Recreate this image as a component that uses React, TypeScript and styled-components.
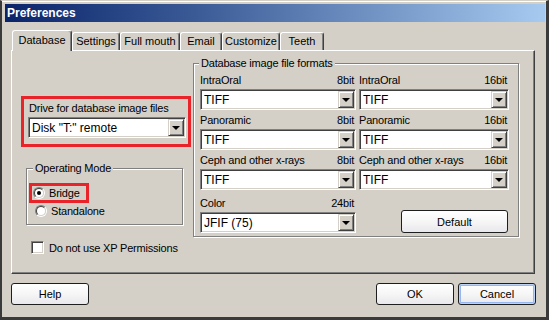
import React from "react";
import styled, { createGlobalStyle, css } from "styled-components";

const FACE = "#d4d0c8";
const RED = "#e8232a";

const Global = createGlobalStyle`
  html, body { margin: 0; padding: 0; background: ${FACE}; }
  body { font-family: "Liberation Sans", Arial, sans-serif; font-size: 11px; letter-spacing: -0.2px; color: #000; }
  * { box-sizing: border-box; }
`;

const Window = styled.div`
  width: 549px;
  height: 320px;
  background: ${FACE};
  border-left: 2px solid #3a3a3a;
  border-right: 3px solid #3a3a3a;
  border-bottom: 3px solid #3a3a3a;
  border-top: 1px solid ${FACE};
  box-shadow: inset 0 1px 0 #fff;
  padding: 3px 1px 0 3px;
  display: flex;
  flex-direction: column;
`;

const TitleBar = styled.div`
  height: 18px;
  background: linear-gradient(to right, #0a246a, #3a5a96 35%, #a6caf0);
  color: #fff;
  font-weight: bold;
  font-size: 12px;
  letter-spacing: 0;
  display: flex;
  align-items: center;
  padding-left: 2px;
`;

const TabStrip = styled.div`
  margin-top: 8px;
  height: 20px;
  padding-left: 7px;
  display: flex;
  align-items: flex-end;
  position: relative;
  z-index: 1;
`;

const Tab = styled.div<{ $w: number; $active?: boolean }>`
  width: ${(p) => p.$w}px;
  height: 18px;
  background: ${FACE};
  border-top: 1px solid #fff;
  border-left: 1px solid #fff;
  border-right: 1px solid #404040;
  border-radius: 3px 3px 0 0;
  box-shadow: inset -1px 0 0 #808080;
  display: flex;
  align-items: center;
  justify-content: center;
  padding-bottom: 1px;
  font-size: 11px;
  letter-spacing: 0;
  white-space: nowrap;
  ${(p) =>
    p.$active &&
    css`
      height: 21px;
      margin-bottom: -1px;
      padding-bottom: 3px;
    `}
`;

const Panel = styled.div`
  margin-left: 6px;
  width: 524px;
  height: 224px;
  border-top: 1px solid #fff;
  border-left: 1px solid #fff;
  border-right: 1px solid #404040;
  border-bottom: 1px solid #404040;
  box-shadow: inset -1px -1px 0 #808080;
  display: flex;
  align-items: flex-start;
  padding-left: 9px;
`;

const LeftCol = styled.div`
  margin-top: 45px;
  width: 170px;
  flex: none;
  display: flex;
  flex-direction: column;
  align-items: flex-start;
`;

const Highlight = styled.div`
  border: 3px solid ${RED};
`;

const DriveBox = styled(Highlight)`
  width: 170px;
  padding: 0 2px 6px 4px;
  display: flex;
  flex-direction: column;
`;

const FieldLabel = styled.div`
  height: 18px;
  display: flex;
  align-items: center;
  justify-content: space-between;
  padding-left: 1px;
  padding-right: 2px;
  white-space: nowrap;
`;

const GroupBox = styled.div`
  position: relative;
  border: 1px solid #808080;
  box-shadow: inset 1px 1px 0 #fff, 1px 1px 0 #fff;
`;

const Legend = styled.span<{ $left: number }>`
  position: absolute;
  top: -7px;
  left: ${(p) => p.$left}px;
  background: ${FACE};
  padding: 0 2px;
  line-height: 13px;
  white-space: nowrap;
`;

const ModeGroup = styled(GroupBox)`
  margin-top: 21px;
  margin-left: 5px;
  width: 157px;
  padding: 14px 0 5px 2px;
  display: flex;
  flex-direction: column;
`;

const RadioRow = styled.div`
  display: flex;
  align-items: center;
  gap: 4px;
  height: 16px;
  padding-left: 6px;
`;

const BridgeRow = styled(Highlight)`
  width: 60px;
  height: 20px;
  display: flex;
  align-items: center;
  gap: 4px;
  padding-left: 1px;
`;

const RadioOuter = styled.span`
  width: 12px;
  height: 12px;
  border-radius: 50%;
  border: 1px solid;
  border-color: #808080 #fff #fff #808080;
  display: inline-flex;
`;

const RadioInner = styled.span`
  flex: 1;
  border-radius: 50%;
  border: 1px solid;
  border-color: #404040 ${FACE} ${FACE} #404040;
  background: #fff;
  display: flex;
  align-items: center;
  justify-content: center;
`;

const Dot = styled.span`
  width: 4px;
  height: 4px;
  border-radius: 50%;
  background: #000;
`;

const Radio = ({ checked }: { checked?: boolean }) => (
  <RadioOuter>
    <RadioInner>{checked && <Dot />}</RadioInner>
  </RadioOuter>
);

const CheckRow = styled.div`
  margin-top: 16px;
  margin-left: 10px;
  display: flex;
  align-items: center;
  gap: 5px;
  height: 13px;
  white-space: nowrap;
`;

const CheckBox = styled.span`
  width: 13px;
  height: 13px;
  background: #fff;
  border: 1px solid;
  border-color: #808080 #fff #fff #808080;
  box-shadow: inset 1px 1px 0 #404040, inset -1px -1px 0 ${FACE};
`;

const FormatGroup = styled(GroupBox)`
  margin-top: 12px;
  margin-left: 2px;
  width: 326px;
  flex: none;
  padding: 7px 9px 3px 6px;
  display: grid;
  grid-template-columns: 156px 150px;
  column-gap: 3px;
  row-gap: 1px;
`;

const Field = styled.div<{ $extra?: number }>`
  display: flex;
  flex-direction: column;
  margin-top: ${(p) => p.$extra || 0}px;
`;

const FormatLabel = styled(FieldLabel)`
  padding-left: 0;
`;

const ButtonCell = styled.div`
  display: flex;
  justify-content: flex-end;
  align-items: flex-end;
  padding-right: 1px;
  margin-top: 3px;
`;

const ComboBox = styled.div<{ $h?: number }>`
  height: ${(p) => p.$h || 21}px;
  background: #fff;
  border: 1px solid;
  border-color: #808080 #fff #fff #808080;
  box-shadow: inset 1px 1px 0 #404040, inset -1px -1px 0 ${FACE};
  padding: 1px;
  display: flex;
`;

const ComboText = styled.span`
  flex: 1;
  display: flex;
  align-items: center;
  padding-left: 2px;
  font-size: 12px;
  letter-spacing: 0;
  white-space: nowrap;
`;

const ComboButton = styled.span`
  width: 16px;
  background: ${FACE};
  border: 1px solid;
  border-color: ${FACE} #404040 #404040 ${FACE};
  box-shadow: inset 1px 1px 0 #fff, inset -1px -1px 0 #808080;
  display: flex;
  align-items: center;
  justify-content: center;
`;

const Arrow = styled.span`
  width: 0;
  height: 0;
  border-left: 4px solid transparent;
  border-right: 4px solid transparent;
  border-top: 4px solid #000;
  margin-top: 1px;
`;

const Combo = ({ value, h }: { value: string; h?: number }) => (
  <ComboBox $h={h}>
    <ComboText>{value}</ComboText>
    <ComboButton>
      <Arrow />
    </ComboButton>
  </ComboBox>
);

const XPButton = styled.button<{ $w: number; $h?: number; $focus?: boolean }>`
  width: ${(p) => p.$w}px;
  height: ${(p) => p.$h || 22}px;
  border: 1px solid #1e1e1e;
  border-radius: 3px;
  background: linear-gradient(180deg, #ffffff 0%, #f5f5f5 55%, #e8e8ee 100%);
  font-family: "Liberation Sans", Arial, sans-serif;
  font-size: 11px;
  color: #000;
  padding: 0;
  ${(p) =>
    p.$focus &&
    css`
      box-shadow: inset 0 0 0 1px #bcd3f7, inset 0 0 0 2px #95b6ee;
    `}
`;

const Footer = styled.div`
  margin-top: 9px;
  padding: 0 9px 0 6px;
  display: flex;
  gap: 4px;
`;

const Spacer = styled.div`
  flex: 1;
`;

const formats = [
  { a: "IntraOral", ab: "8bit", b: "IntraOral", bb: "16bit" },
  { a: "Panoramic", ab: "8bit", b: "Panoramic", bb: "16bit" },
  { a: "Ceph and other x-rays", ab: "8bit", b: "Ceph and other x-rays", bb: "16bit" },
];

const tabs = [
  { t: "Database", w: 60 },
  { t: "Settings", w: 48 },
  { t: "Full mouth", w: 60 },
  { t: "Email", w: 42 },
  { t: "Customize", w: 58 },
  { t: "Teeth", w: 44 },
];

export default function App() {
  return (
    <>
      <Global />
      <Window>
        <TitleBar>Preferences</TitleBar>
        <TabStrip>
          {tabs.map((t, i) => (
            <Tab key={t.t} $w={t.w} $active={i === 0}>
              {t.t}
            </Tab>
          ))}
        </TabStrip>
        <Panel>
          <LeftCol>
            <DriveBox>
              <FieldLabel>Drive for database image files</FieldLabel>
              <Combo value={'Disk "T:" remote'} />
            </DriveBox>
            <ModeGroup>
              <Legend $left={6}>Operating Mode</Legend>
              <BridgeRow>
                <Radio checked />
                <span>Bridge</span>
              </BridgeRow>
              <RadioRow>
                <Radio />
                <span>Standalone</span>
              </RadioRow>
            </ModeGroup>
            <CheckRow>
              <CheckBox />
              <span>Do not use XP Permissions</span>
            </CheckRow>
          </LeftCol>
          <FormatGroup>
            <Legend $left={5}>Database image file formats</Legend>
            {formats.map((f) => (
              <React.Fragment key={f.a}>
                <Field>
                  <FormatLabel>
                    <span>{f.a}</span>
                    <span>{f.ab}</span>
                  </FormatLabel>
                  <Combo value="TIFF" />
                </Field>
                <Field>
                  <FormatLabel>
                    <span>{f.b}</span>
                    <span>{f.bb}</span>
                  </FormatLabel>
                  <Combo value="TIFF" />
                </Field>
              </React.Fragment>
            ))}
            <Field $extra={3}>
              <FormatLabel>
                <span>Color</span>
                <span>24bit</span>
              </FormatLabel>
              <Combo value="JFIF (75)" />
            </Field>
            <ButtonCell>
              <XPButton $w={107} $h={23}>
                Default
              </XPButton>
            </ButtonCell>
          </FormatGroup>
        </Panel>
        <Footer>
          <XPButton $w={78}>Help</XPButton>
          <Spacer />
          <XPButton $w={78}>OK</XPButton>
          <XPButton $w={78} $focus>
            Cancel
          </XPButton>
        </Footer>
      </Window>
    </>
  );
}
